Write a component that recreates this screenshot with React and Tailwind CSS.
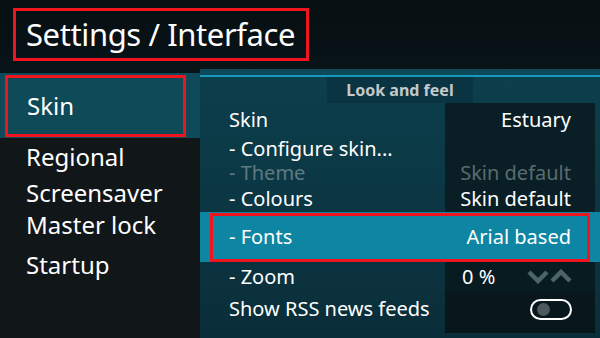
import React from "react";

function Chevrons() {
  return (
    <svg width="46" height="15" viewBox="0 0 46 15">
      <path d="M2 3 L11 12 L20 3" fill="none" stroke="#4b6469" strokeWidth="4.5" />
      <path d="M25 12 L34 3 L43 12" fill="none" stroke="#4b6469" strokeWidth="4.5" />
    </svg>
  );
}

function Toggle() {
  return (
    <div className="w-[42px] h-[21px] rounded-full border-2 border-white flex items-center pl-[5px]">
      <div className="w-[13px] h-[13px] rounded-full bg-[#4c5a5e]" />
    </div>
  );
}

function Row({ label, value, h, dim, right }) {
  return (
    <div className={`flex ${h}`}>
      <div className={`flex-1 flex items-center pl-[29px] ${dim ? "text-[#5f7a82]" : "text-white"}`}>{label}</div>
      <div
        className={`w-[150px] mr-[5px] flex items-center bg-[#091e25] ${right ? "justify-end pr-[24px]" : "pl-[17px]"} ${dim ? "text-[#5a6c70]" : "text-white"}`}
      >
        {value}
      </div>
    </div>
  );
}

export default function App() {
  return (
    <div
      className="w-[600px] h-[338px] overflow-hidden flex flex-col bg-gradient-to-b from-[#070f12] to-[#0c2630] text-white"
      style={{ fontFamily: '"Noto Sans", "Open Sans", sans-serif' }}
    >
      {/* title */}
      <div className="h-[68px] pt-[8px] pl-[13px]">
        <div className="inline-flex items-center h-[53px] w-[296px] border-[3px] border-[#f0141e] pl-[10px] text-[31px] leading-none tracking-[-0.4px]">
          Settings / Interface
        </div>
      </div>

      <div className="flex flex-1">
        {/* left menu */}
        <div className="w-[200px] mt-[5px] bg-[#111619] flex flex-col">
          <div className="h-[65px] bg-[#0e4a58] pl-[5px] pt-[2px]">
            <div className="w-[181px] h-[62px] border-[3px] border-[#f0141e] flex items-center pl-[19px] text-[24px]">
              Skin
            </div>
          </div>
          <div className="pl-[26px] text-[24px] leading-none flex flex-col">
            <div className="h-[31px] flex items-end">Regional</div>
            <div className="h-[36px] flex items-end">Screensaver</div>
            <div className="h-[32px] flex items-end">Master lock</div>
            <div className="h-[40px] flex items-end">Startup</div>
          </div>
        </div>

        {/* right panel */}
        <div className="flex-1 flex flex-col bg-gradient-to-b from-[#0c3f4d] to-[#0a2e39]">
          <div className="h-[1px] bg-[#06141a]" />
          <div className="h-[6px] bg-[#0f4a5a]" />
          <div className="h-[2px] bg-[#1698bb]" />
          <div className="h-[26px] flex justify-center">
            <div className="w-[146px] bg-[#0a3442] flex items-center justify-center text-[16px] font-bold text-[#c4c9cb]">
              Look and feel
            </div>
          </div>
          <div className="text-[20px] leading-none">
            <Row h="h-[34px]" label="Skin" value="Estuary" right />
            <Row h="h-[24px]" label="- Configure skin..." value="" />
            <Row h="h-[24px]" label="- Theme" value="Skin default" right dim />
            <Row h="h-[27px]" label="- Colours" value="Skin default" right />
            <div className="h-[50px] bg-[#0e86a3] pl-[10px] flex items-center">
              <div className="w-[380px] h-[49px] border-[3px] border-[#f0141e] flex items-center justify-between pl-[16px] pr-[16px] text-white">
                <span>- Fonts</span>
                <span>Arial based</span>
              </div>
            </div>
            <div className="flex h-[29px]">
              <div className="flex-1 flex items-center pl-[29px]">- Zoom</div>
              <div className="w-[150px] mr-[5px] bg-[#081b21] flex items-center pl-[17px] pr-[22px] justify-between">
                <span>0 %</span>
                <Chevrons />
              </div>
            </div>
            <div className="flex h-[36px]">
              <div className="flex-1 flex items-center pl-[29px]">Show RSS news feeds</div>
              <div className="w-[150px] mr-[5px] bg-[#07171c] flex items-center justify-end pr-[23px]">
                <Toggle />
              </div>
            </div>
            <div className="flex h-[6px]">
              <div className="flex-1" />
              <div className="w-[150px] mr-[5px] bg-[#07161b]" />
            </div>
          </div>
        </div>
      </div>
    </div>
  );
}
